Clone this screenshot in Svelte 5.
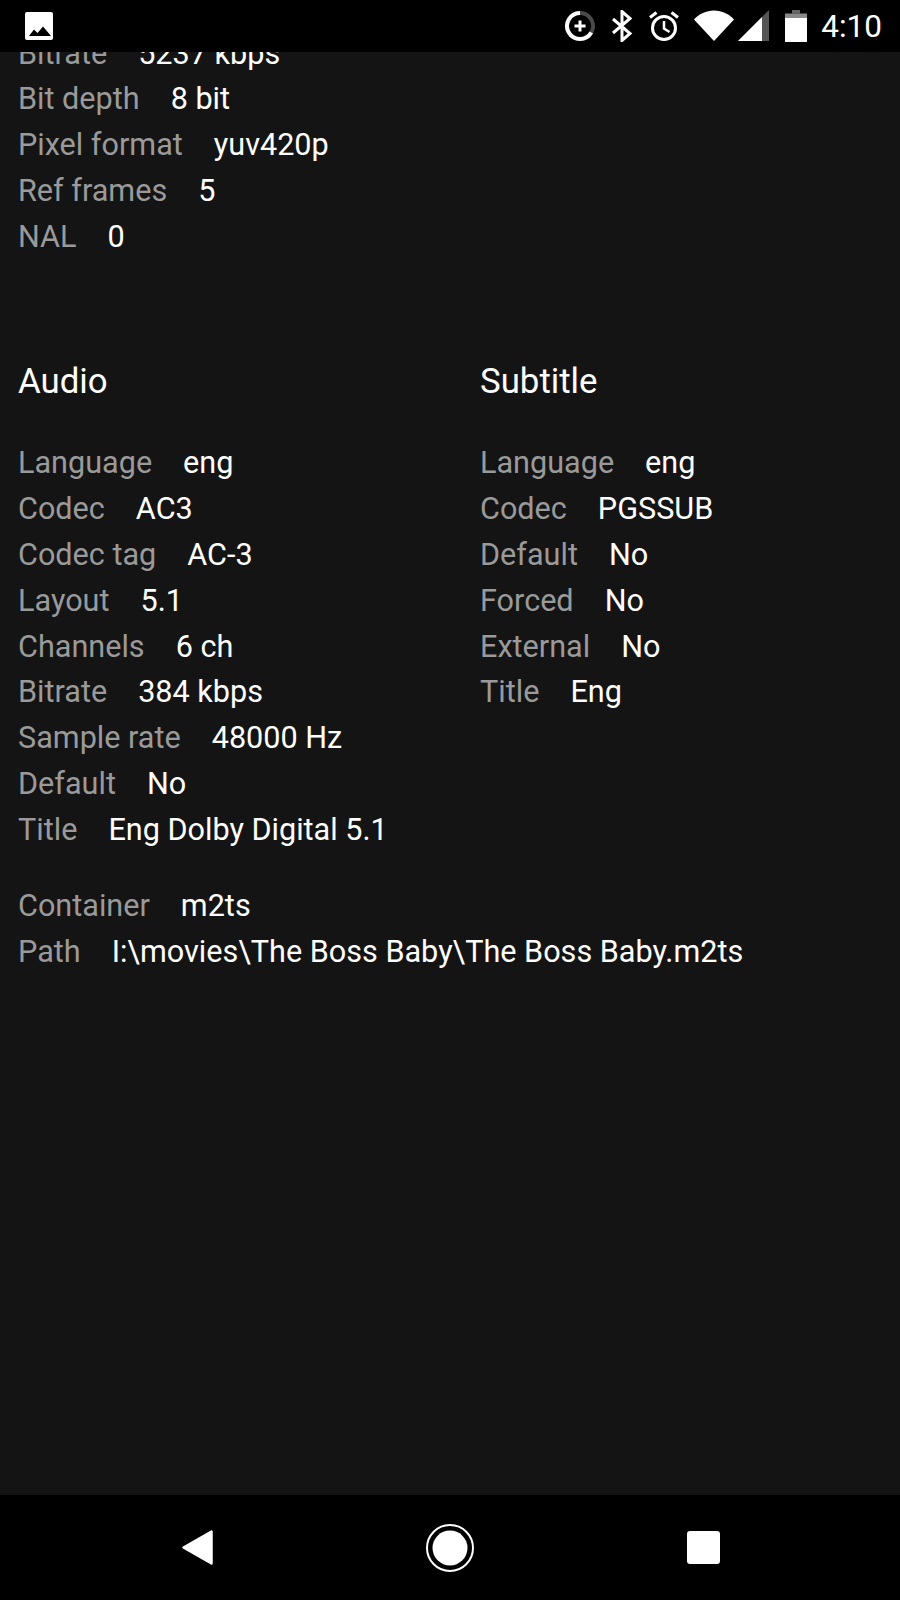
<script>
  const video = [
    ["Bitrate", "5237 kbps"],
    ["Bit depth", "8 bit"],
    ["Pixel format", "yuv420p"],
    ["Ref frames", "5"],
    ["NAL", "0"]
  ];
  const audio = [
    ["Language", "eng"],
    ["Codec", "AC3"],
    ["Codec tag", "AC-3"],
    ["Layout", "5.1"],
    ["Channels", "6 ch"],
    ["Bitrate", "384 kbps"],
    ["Sample rate", "48000 Hz"],
    ["Default", "No"],
    ["Title", "Eng Dolby Digital 5.1"]
  ];
  const subtitle = [
    ["Language", "eng"],
    ["Codec", "PGSSUB"],
    ["Default", "No"],
    ["Forced", "No"],
    ["External", "No"],
    ["Title", "Eng"]
  ];
  const file = [
    ["Container", "m2ts"],
    ["Path", "I:\\movies\\The Boss Baby\\The Boss Baby.m2ts"]
  ];
</script>

{#snippet rows(items)}
  {#each items as [label, value]}
    <div class="row"><span class="label">{label}</span><span class="value">{value}</span></div>
  {/each}
{/snippet}

<div class="screen">
  <header class="status">
    <svg class="pic" width="28" height="28" viewBox="0 0 28 28">
      <rect width="28" height="28" rx="2" fill="#fff" />
      <path d="M4 24l5-6.500 3.500 3.500 5.500-6.500 8 9.500z" fill="#000" />
    </svg>
    <div class="tray">
      <svg class="saver" width="32" height="32" viewBox="0 0 32 32" fill="none">
        <circle cx="16" cy="16" r="13" stroke="#4a4a4a" stroke-width="4" />
        <path d="M16 3A13 13 0 1 0 27.300 22.500" stroke="#fff" stroke-width="4" />
        <path d="M16 10.500v11M10.500 16h11" stroke="#fff" stroke-width="3" />
      </svg>
      <svg class="bt" width="22" height="32" viewBox="0 0 22 32" fill="none">
        <path d="M2 9l17 14.500-8 7V1.500l8 7L2 23" stroke="#fff" stroke-width="3" />
      </svg>
      <svg class="alarm" width="32" height="32" viewBox="0 0 32 32" fill="none">
        <circle cx="16" cy="18" r="11.500" stroke="#fff" stroke-width="3" />
        <path d="M16 11v7.500l5.500 3.500" stroke="#fff" stroke-width="2.500" />
        <path d="M2 7.500L8.500 2.500M30 7.500L23.500 2.500" stroke="#fff" stroke-width="3" />
      </svg>
      <svg class="wifi" width="40" height="32" viewBox="0 0 40 32">
        <path d="M0 9.500C5 4 12 .5 20 .5s15 3.500 20 9L20 31z" fill="#fff" />
      </svg>
      <svg class="signal" width="31" height="32" viewBox="0 0 31 32">
        <path d="M0 31L31 0v31z" fill="#555" />
        <path d="M0 31l24-24v24z" fill="#fff" />
      </svg>
      <svg class="battery" width="22" height="32" viewBox="0 0 22 32">
        <path d="M7 0h8v3.500h-8z" fill="#666" />
        <path d="M0 3.500h22v5H0z" fill="#888" />
        <rect y="8" width="22" height="24" fill="#fff" />
      </svg>
      <span class="clock">4:10</span>
    </div>
  </header>

  <main class="body">
    <div class="content">
      <section class="list">{@render rows(video)}</section>
      <div class="columns">
        <section>
          <h2>Audio</h2>
          {@render rows(audio)}
        </section>
        <section>
          <h2>Subtitle</h2>
          {@render rows(subtitle)}
        </section>
      </div>
      <section class="file">{@render rows(file)}</section>
    </div>
  </main>

  <nav class="nav">
    <svg width="31" height="35" viewBox="0 0 31 35">
      <path d="M29.500 1.500v32L1.500 17.500z" fill="#fff" stroke="#fff" stroke-width="2.500" stroke-linejoin="round" />
    </svg>
    <svg width="48" height="48" viewBox="0 0 48 48" fill="none">
      <circle cx="24" cy="24" r="23" stroke="#fff" stroke-width="2" />
      <circle cx="24" cy="24" r="17.500" fill="#fff" />
    </svg>
    <svg width="33" height="33" viewBox="0 0 33 33">
      <rect width="33" height="33" rx="3" fill="#fff" />
    </svg>
  </nav>
</div>

<style>
  :global(body) {
    margin: 0;
    background: #141414;
  }
  .screen {
    width: 900px;
    height: 1600px;
    display: flex;
    flex-direction: column;
    overflow: hidden;
    font-family: Roboto, "Noto Sans", sans-serif;
  }
  .status {
    flex: 0 0 52px;
    background: #000;
    display: flex;
    align-items: center;
    justify-content: space-between;
    padding: 0 18px 0 25px;
  }
  .pic {
    display: block;
  }
  .tray {
    display: flex;
    align-items: center;
  }
  .tray svg {
    display: block;
  }
  .bt {
    margin-left: 15px;
  }
  .alarm {
    margin-left: 15px;
  }
  .wifi {
    margin-left: 14px;
  }
  .signal {
    margin-left: 4px;
  }
  .battery {
    margin-left: 16px;
  }
  .clock {
    color: #fff;
    font-size: 31.5px;
    margin-left: 14px;
  }
  .body {
    flex: 1;
    min-height: 0;
    overflow: hidden;
    background: #141414;
  }
  .content {
    margin-top: -21.500px;
    padding: 0 18px;
  }
  .row {
    height: 45.900px;
    line-height: 45.900px;
    font-size: 30.600px;
    white-space: nowrap;
  }
  .label {
    color: #9a9a9a;
    margin-right: 31px;
  }
  .value {
    color: #fff;
  }
  .columns {
    display: grid;
    grid-template-columns: 462px 1fr;
    margin-top: 91px;
  }
  h2 {
    margin: 0 0 29px;
    font-size: 34.800px;
    line-height: 60px;
    font-weight: 400;
    color: #fff;
  }
  .file {
    margin-top: 30px;
  }
  .nav {
    flex: 0 0 105px;
    background: #000;
    display: flex;
    align-items: center;
    justify-content: space-between;
    padding: 0 180px 0 182px;
  }
  .nav svg {
    display: block;
  }
</style>
